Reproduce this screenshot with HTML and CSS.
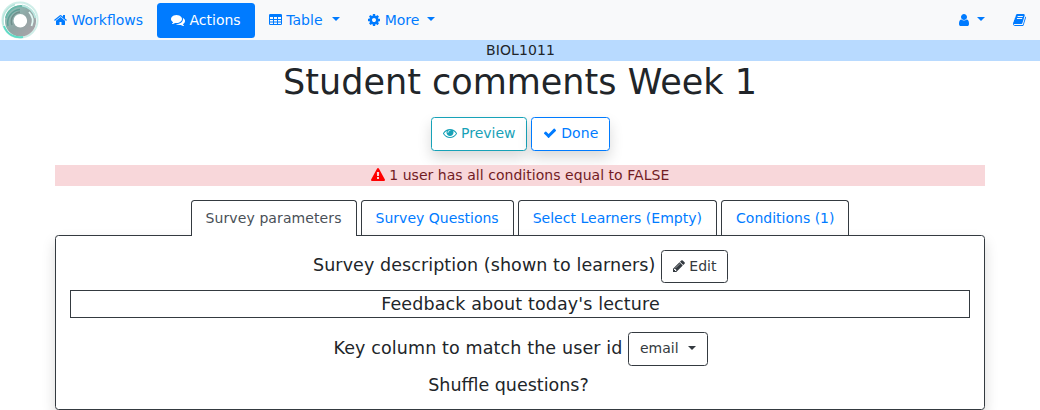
FILE: index.html
```html
<!DOCTYPE html>
<html lang="en">
<head>
<meta charset="utf-8">
<title>Student comments Week 1</title>
<link rel="stylesheet" href="styles.css">
</head>
<body>
<nav class="navbar">
  <a class="brand" href="#" aria-label="Home">
    <svg class="logo" viewBox="0 0 40 40">
      <defs>
        <linearGradient id="ring" x1="0" y1="0" x2="1" y2="1">
          <stop offset="0" stop-color="#8fbfb8"/>
          <stop offset=".5" stop-color="#8fa5a4"/>
          <stop offset="1" stop-color="#a6a4a8"/>
        </linearGradient>
        <filter id="soft"><feGaussianBlur stdDeviation=".6"/></filter>
      </defs>
      <rect width="40" height="40" fill="#fff"/>
      <g fill="none" filter="url(#soft)">
        <circle cx="20" cy="20" r="17.600" stroke="#cfeee8" stroke-width="2"/>
        <circle cx="20.500" cy="21" r="10.800" stroke="url(#ring)" stroke-width="9.500"/>
        <path d="M3.500 25A17 17 0 0 1 15 4.500" stroke="#b5e5dc" stroke-width="1.500"/>
        <path d="M4 26A16.500 16.500 0 0 0 23 37" stroke="#5fdcc6" stroke-width="2"/>
        <path d="M6 18A15 15 0 0 1 28 8" stroke="#68b9aa" stroke-width="2"/>
        <path d="M8 26A13.500 13.500 0 0 1 20 9.500" stroke="#5f9f97" stroke-width="1.500"/>
        <path d="M12 25A9.500 9.500 0 0 1 20 12" stroke="#6f8f8c" stroke-width="1.500"/>
        <path d="M29 12A13 13 0 0 1 31.500 26" stroke="#e2faf5" stroke-width="1.800"/>
        <path d="M22 5.500A16 16 0 0 1 35.500 18" stroke="#b8e6df" stroke-width="2"/>
      </g>
      <circle cx="20.300" cy="20.800" r="6.800" fill="#fff"/>
    </svg>
  </a>
  <a class="nav-link" href="#"><svg class="icon w13" viewBox="64 0 1664 1792"><path d="M1472 992v480q0 26-19 45t-45 19h-384v-384h-256v384h-384q-26 0-45-19t-19-45v-480q0-1 .5-3t.5-3l575-474 575 474q1 2 1 6zm223-69l-62 74q-8 9-21 11h-3q-13 0-21-7l-692-577-692 577q-12 8-24 7-13-2-21-11l-62-74q-8-10-7-23.500t11-21.500l719-599q32-26 76-26t76 26l244 204v-195q0-14 9-23t23-9h192q14 0 23 9t9 23v408l219 182q10 8 11 21.500t-7 23.500z"/></svg> Workflows</a>
  <a class="nav-link active" href="#"><svg class="icon" viewBox="0 0 1792 1792"><path d="M1408 768q0 139-94 257t-256.500 186.500-353.500 68.500q-86 0-176-16-124 88-278 128-36 9-86 16h-3q-11 0-20.500-8t-11.500-21q-1-3-1-6.500t.5-6.500 2-6l2.500-5 3.500-5.500 4-5 4.500-5 4-4.500q5-6 23-25t26-29.500 22.500-29 25-38.500 20.500-44q-124-72-195-177t-71-224q0-139 94-257t256.500-186.500 353.500-68.500 353.500 68.500 256.500 186.500 94 257zm384 256q0 120-71 224.500t-195 176.500q10 24 20.500 44t25 38.500 22.500 29 26 29.500 23 25q1 1 4 4.500t4.500 5 4 5 3.500 5.500l2.500 5 2 6 .5 6.500-1 6.500q-3 14-13 22t-22 7q-50-7-86-16-154-40-278-128-90 16-176 16-271 0-472-132 58 4 88 4 161 0 309-45t264-129q125-92 192-212t67-254q0-77-23-152 129 71 204 178t75 230z"/></svg> Actions</a>
  <a class="nav-link caret wide" href="#"><svg class="icon w13" viewBox="0 0 13 14"><path fill-rule="evenodd" d="M1.250 1h10.500Q13 1 13 2.250v8.500Q13 12 11.750 12H1.250Q0 12 0 10.750v-8.500Q0 1 1.250 1zM1 4v2h3V4zM5 4v2h3V4zM9 4v2h3V4zM1 7v1.500h3V7zM5 7v1.500h3V7zM9 7v1.500h3V7zM1 9.500V11h3V9.500zM5 9.500V11h3V9.500zM9 9.500V11h3V9.500z"/></svg> Table </a>
  <a class="nav-link caret" href="#"><svg class="icon w12" viewBox="128 0 1536 1792"><path d="M1152 896q0-106-75-181t-181-75-181 75-75 181 75 181 181 75 181-75 75-181zm512-109v222q0 12-8 23t-20 13l-185 28q-19 54-39 91 35 50 107 138 10 12 10 25t-9 23q-27 37-99 108t-94 71q-12 0-26-9l-138-108q-44 23-91 38-16 136-29 186-7 28-36 28h-222q-14 0-24.500-8.500t-11.500-21.500l-28-184q-49-16-90-37l-141 107q-10 9-25 9-14 0-25-11-126-114-165-168-7-10-7-23 0-12 8-23 15-21 51-66.500t54-70.500q-27-50-41-99l-183-27q-13-2-21-12.500t-8-23.500v-222q0-12 8-23t19-13l186-28q14-46 39-92-40-57-107-138-10-12-10-24 0-10 9-23 26-36 98.500-107.500t94.500-71.500q13 0 26 10l138 107q44-23 91-38 16-136 29-186 7-28 36-28h222q14 0 24.500 8.500t11.500 21.500l28 184q49 16 90 37l142-107q9-9 24-9 13 0 25 10 129 119 165 170 7 8 7 22 0 12-8 23-15 21-51 66.500t-54 70.500q26 50 41 98l183 28q13 2 21 12.500t8 23.500z"/></svg> More </a>
  <a class="nav-link caret push" href="#" aria-label="User"><svg class="icon w10" viewBox="256 0 1280 1792"><path d="M1536 1399q0 109-62.500 187t-150.500 78h-854q-88 0-150.500-78t-62.500-187q0-85 8.500-160.500t31.500-152 58.500-131 94-89 134.500-34.500q131 128 313 128t313-128q76 0 134.500 34.500t94 89 58.500 131 31.500 152 8.500 160.500zm-256-887q0 159-112.500 271.500t-271.500 112.500-271.500-112.500-112.500-271.500 112.500-271.500 271.500-112.500 271.500 112.500 112.500 271.500z"/></svg> </a>
  <a class="nav-link" href="#" aria-label="Documentation"><svg class="icon w13" viewBox="64 0 1664 1792"><path d="M1703 478q40 57 18 129l-275 906q-19 64-76.500 107.500t-122.500 43.500h-923q-77 0-148.500-53.500t-99.500-131.500q-24-67-2-127 0-4 3-27t4-37q1-8-3-21.500t-3-19.500q2-11 8-21t16.500-23.500 16.500-23.500q23-38 45-91.500t30-91.500q3-10 .5-30t-.5-28q3-11 17-28t17-23q21-36 42-92t25-90q1-9-2.500-32t.5-28q4-13 22-30.500t22-22.500q19-26 42.500-84.500t27.500-96.500q1-8-3-25.500t-2-26.500q2-8 9-18t18-23 17-21q8-12 16.500-30.500t15-35 16-36 19.500-32 26.500-23.500 36-11.500 47.500 5.500l-1 3q38-9 51-9h761q74 0 114 56t18 130l-274 906q-36 119-71.500 153.500t-128.500 34.500h-869q-27 0-38 15-11 16-1 43 24 70 144 70h923q29 0 56-15.500t35-41.500l300-987q7-22 5-57 38 15 59 43zm-1064 2q-4 13 2 22.500t20 9.500h608q13 0 25.500-9.500t16.500-22.500l21-64q4-13-2-22.500t-20-9.500h-608q-13 0-25.500 9.500t-16.500 22.500zm-83 256q-4 13 2 22.500t20 9.500h608q13 0 25.500-9.500t16.500-22.500l21-64q4-13-2-22.500t-20-9.500h-608q-13 0-25.500 9.500t-16.500 22.500z"/></svg></a>
</nav>
<div class="workflow-name">BIOL1011</div>
<main class="container">
  <h1 class="title">Student comments Week 1</h1>
  <div class="toolbar">
    <button class="btn btn-info"><svg class="icon" viewBox="0 0 1792 1792"><path d="M1664 960q-152-236-381-353 61 104 61 225 0 185-131.500 316.500t-316.500 131.500-316.500-131.500-131.500-316.500q0-121 61-225-229 117-381 353 133 205 333.500 326.500t434.500 121.500 434.500-121.500 333.500-326.500zm-720-384q0-20-14-34t-34-14q-125 0-214.500 89.500t-89.500 214.500q0 20 14 34t34 14 34-14 14-34q0-86 61-147t147-61q20 0 34-14t14-34zm848 384q0 34-20 69-140 230-376.500 368.500t-499.500 138.500-499.500-139-376.500-368q-20-35-20-69t20-69q140-229 376.500-368t499.500-139 499.500 139 376.500 368q20 35 20 69z"/></svg> Preview</button>
    <button class="btn btn-primary done"><svg class="icon" viewBox="0 0 1792 1792"><path d="M1671 566q0 40-28 68l-724 724-136 136q-28 28-68 28t-68-28l-136-136-362-362q-28-28-28-68t28-68l136-136q28-28 68-28t68 28l294 295 656-657q28-28 68-28t68 28l136 136q28 28 28 68z"/></svg> Done</button>
  </div>
  <div class="alert"><svg class="icon warning" viewBox="0 0 1792 1792"><path d="M1024 1375v-190q0-14-9.500-23.500t-22.500-9.500h-192q-13 0-22.500 9.500t-9.500 23.500v190q0 14 9.500 23.500t22.500 9.500h192q13 0 22.500-9.500t9.500-23.500zm-2-374l18-459q0-12-10-19-13-11-24-11h-220q-11 0-24 11-10 7-10 21l17 457q0 10 10 16.500t24 6.500h185q14 0 23.500-6.500t10.500-16.500zm-14-934l768 1408q35 63-2 126-17 29-46.500 46t-63.500 17h-1536q-34 0-63.500-17t-46.500-46q-37-63-2-126l768-1408q17-31 47-49t65-18 65 18 47 49z"/></svg> 1 user has all conditions equal to FALSE</div>
  <div class="tabs">
    <a class="tab selected" href="#">Survey parameters</a>
    <a class="tab" href="#">Survey Questions</a>
    <a class="tab learners" href="#">Select Learners (Empty)</a>
    <a class="tab" href="#">Conditions (1)</a>
  </div>
  <section class="panel">
    <div class="heading intro"><span>Survey description (shown to learners)</span> <button class="btn btn-dark"><svg class="icon w12" viewBox="128 0 1536 1792"><path d="M491 1536l91-91-235-235-91 91v107h128v128h107zm523-928q0-22-22-22-10 0-17 7l-542 542q-7 7-7 17 0 22 22 22 10 0 17-7l542-542q7-7 7-17zm-54-192l416 416-832 832h-416v-416zm683 96q0 53-37 90l-166 166-416-416 166-165q36-38 90-38 53 0 91 38l235 234q37 39 37 91z"/></svg> Edit</button></div>
    <div class="description">Feedback about today's lecture</div>
    <div class="heading key"><span>Key column to match the user id</span> <button class="btn btn-dark caret wide">email </button></div>
    <div class="heading shuffle">Shuffle questions?</div>
  </section>
</main>
</body>
</html>
```
FILE: styles.css
```css
* { box-sizing: border-box; }
html { overflow: hidden; }
body {
  margin: 0;
  background: #fff;
  color: #212529;
  font: 14px/21px "DejaVu Sans", sans-serif;
}
a { text-decoration: none; color: #007bff; }

.icon {
  width: 14px;
  height: 14px;
  vertical-align: -2px;
  fill: currentColor;
}
.w13 { width: 13px; }
.w12 { width: 12px; }
.w10 { width: 10px; }
.warning { color: #f00; }

.navbar {
  display: flex;
  align-items: center;
  height: 40px;
  background: #f8f9fa;
}
.brand, .logo { display: block; width: 40px; height: 40px; }
.nav-link {
  padding: 7px 14px;
  border-radius: 3.5px;
  white-space: pre;
}
.nav-link.active { background: #007bff; color: #fff; }
.push { margin-left: auto; }
.caret::after {
  content: "";
  display: inline-block;
  margin-left: .255em;
  vertical-align: .255em;
  border: .3em solid transparent;
  border-top-color: currentColor;
  border-bottom: 0;
}
.wide::after { margin-left: 5px; }
.nav-link.wide { letter-spacing: .07px; }

.workflow-name {
  height: 21px;
  padding-left: 1px;
  background: #b8daff;
  text-align: center;
  letter-spacing: .1px;
}
.container { width: 930px; margin: 0 auto; text-align: center; }
.title { margin: 0; font-size: 35px; font-weight: 400; line-height: 42px; }

.toolbar {
  display: flex;
  justify-content: center;
  gap: 4px;
  margin: 14px 0;
  padding-left: 1px;
}
.btn {
  padding: 5.25px 10.5px;
  border: 1px solid;
  border-radius: 3.5px;
  background: #fff;
  font: 14px/21px "DejaVu Sans", sans-serif;
  white-space: pre;
  vertical-align: middle;
}
.toolbar .btn { box-shadow: 0 7px 14px rgba(0, 0, 0, .15); }
.btn-info { color: #17a2b8; }
.btn-primary { color: #007bff; }
.btn-dark { color: #343a40; }
.done { letter-spacing: .1px; }

.alert {
  position: relative;
  background: #f8d7da;
  color: #721c24;
  letter-spacing: .04px;
}

.tabs {
  display: flex;
  justify-content: center;
  gap: 4px;
  margin-top: 14px;
}
.tab {
  height: 35px;
  padding: 7px 14px;
  border: 1px solid #343a40;
  border-bottom: 0;
  border-radius: 3.5px 3.5px 0 0;
}
.learners { letter-spacing: .02px; }
.selected {
  position: relative;
  z-index: 1;
  height: 36px;
  margin-bottom: -1px;
  background: #fff;
  color: #495057;
  letter-spacing: .1px;
}
.panel {
  height: 175px;
  padding: 14px;
  border: 1px solid #343a40;
  border-radius: 3.5px;
  box-shadow: 0 7px 14px rgba(0, 0, 0, .15);
}
.heading, .description { font-size: 17.5px; line-height: 21px; }
.intro, .key {
  display: flex;
  justify-content: center;
  gap: 6px;
}
.intro { padding-left: 1px; }
.key { padding-left: 1px; }
.intro span { padding-top: 5px; letter-spacing: .08px; }
.key span { padding-top: 5.5px; letter-spacing: .12px; }
.description {
  height: 28px;
  margin: 7px 0 14px;
  padding: 2.5px 2px 2.5px 3px;
  border: 1px solid #343a40;
  letter-spacing: .12px;
}
.shuffle { margin-top: 9.5px; padding-right: 23px; }
```
